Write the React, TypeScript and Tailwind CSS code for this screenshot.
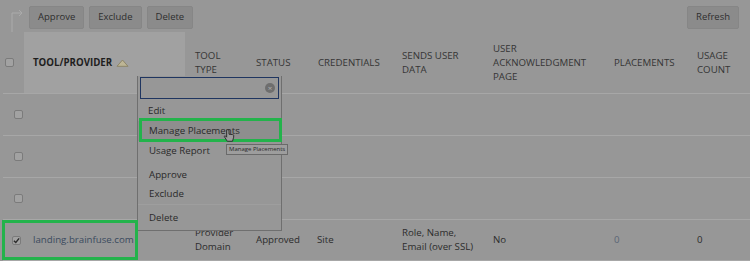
import React from "react";

const cols = [
  { w: "w-[24px]" },
  { w: "w-[161px]" },
  { w: "w-[61px]" },
  { w: "w-[62px]" },
  { w: "w-[84px]" },
  { w: "w-[91px]" },
  { w: "w-[121px]" },
  { w: "w-[83px]" },
  { w: "w-[63px]" },
];

const Checkbox = ({ checked = false }: { checked?: boolean }) => (
  <span className="flex h-[9px] w-[9px] items-center justify-center rounded-[2px] border border-[#7b7b7b] bg-[#a2a2a2]">
    {checked && (
      <svg width="7" height="7" viewBox="0 0 8 8">
        <path d="M1 4.2 L3.2 6.3 L7 1.5" fill="none" stroke="#2b2b2b" strokeWidth="1.6" />
      </svg>
    )}
  </span>
);

const ToolbarButton = ({ label }: { label: string }) => (
  <button className="h-[23px] rounded-[2px] border border-[#868686] bg-[#8b8b8b] px-[8px] text-[9.5px] text-[#2e2e2e]">
    {label}
  </button>
);

const EmptyRow = () => (
  <div className="flex h-[42px] items-center border-t border-[#a7a7a7]">
    <div className="flex w-[24px] justify-end pr-[4px]">
      <Checkbox />
    </div>
  </div>
);

export default function App() {
  return (
    <div
      className="relative h-[261px] w-[750px] overflow-hidden bg-[#979797] text-[9.7px] text-[#2c2c2c]"
      style={{ fontFamily: '"Open Sans", "Liberation Sans", sans-serif' }}
    >
      {/* toolbar */}
      <div className="flex h-[32px] items-start pt-[6px]">
        <div className="flex w-[29px] justify-start pl-[10px] pt-[2px]">
          <svg width="14" height="24" viewBox="0 0 14 24">
            <path d="M2 24 V5 H12 M9 2 L12 5 L9 8" fill="none" stroke="#ababab" strokeWidth="1" />
          </svg>
        </div>
        <div className="flex gap-[5px]">
          <ToolbarButton label="Approve" />
          <ToolbarButton label="Exclude" />
          <ToolbarButton label="Delete" />
        </div>
        <div className="ml-auto pr-[11px]">
          <ToolbarButton label="Refresh" />
        </div>
      </div>

      {/* header */}
      <div className="flex h-[61px] items-center leading-[14px] text-[#353535]">
        <div className={`${cols[0].w} flex justify-start pl-[5px]`}>
          <Checkbox />
        </div>
        <div className={`${cols[1].w} flex h-full items-center bg-[#a1a1a1] pl-[9px] font-bold text-[#1e1e1e]`}>
          TOOL/PROVIDER
          <svg className="ml-[4px]" width="13" height="8" viewBox="0 0 13 8">
            <path d="M1 7.3 L6.5 1 L12 7.3 Z" fill="#bdb595" stroke="#857c5c" strokeWidth="0.8" />
          </svg>
        </div>
        <div className={`${cols[2].w} pl-[10px]`}>TOOL<br />TYPE</div>
        <div className={`${cols[3].w} pl-[10px]`}>STATUS</div>
        <div className={`${cols[4].w} pl-[10px]`}>CREDENTIALS</div>
        <div className={`${cols[5].w} pl-[10px]`}>SENDS USER<br />DATA</div>
        <div className={`${cols[6].w} pl-[10px]`}>USER<br />ACKNOWLEDGMENT<br />PAGE</div>
        <div className={`${cols[7].w} pl-[10px]`}>PLACEMENTS</div>
        <div className={`${cols[8].w} pl-[10px]`}>USAGE<br />COUNT</div>
      </div>

      <div className="ml-[3px]">
        <EmptyRow />
        <EmptyRow />
        <EmptyRow />
        <div className="flex h-[42px] items-center border-t border-b border-[#a7a7a7] leading-[14px]">
          <div className="flex w-[21px] justify-end pr-[3px]">
            <Checkbox checked />
          </div>
          <div className={`${cols[1].w} pl-[9px] text-[#3a4a5e]`}>landing.brainfuse.com</div>
          <div className={`${cols[2].w} pl-[10px]`}>Provider<br />Domain</div>
          <div className={`${cols[3].w} pl-[10px]`}>Approved</div>
          <div className={`${cols[4].w} pl-[9px]`}>Site</div>
          <div className={`${cols[5].w} pl-[10px]`}>Role, Name,<br />Email (over SSL)</div>
          <div className={`${cols[6].w} pl-[10px]`}>No</div>
          <div className={`${cols[7].w} pl-[10px] text-[#5a6676]`}>0</div>
          <div className={`${cols[8].w} pl-[10px]`}>0</div>
        </div>
      </div>

      {/* context menu */}
      <div className="absolute left-[137px] top-[76px] flex h-[155px] w-[145px] flex-col border border-t-0 border-[#6f6f6f] bg-[#979797] text-[#2a2a2a]">
        <div className="mx-[2px] mt-[1px] flex h-[22px] items-center justify-end border border-[#1f3560] pr-[3px]">
          <span className="flex h-[10px] w-[10px] items-center justify-center rounded-full bg-[#6e6e6e] text-[8px] leading-none text-[#b0b0b0]">
            ×
          </span>
        </div>
        <div className="mt-[2px] flex h-[20px] items-center pl-[10px]">Edit</div>
        <div className="flex h-[20px] items-center bg-[#8e8e8e] pl-[11px]">Manage Placements</div>
        <div className="flex h-[20px] items-center pl-[11px]">Usage Report</div>
        <div className="mt-[4px] flex h-[20px] items-center pl-[11px]">Approve</div>
        <div className="flex h-[20px] items-center border-b border-[#9e9e9e] pl-[11px]">Exclude</div>
        <div className="mt-[3px] flex h-[20px] items-center pl-[11px]">Delete</div>
      </div>

      {/* green highlights */}
      <div className="absolute left-[139px] top-[118px] h-[24px] w-[143px] border-[3px] border-[#23b34b]" />
      <div className="absolute left-[2px] top-[220px] h-[40px] w-[136px] border-[3px] border-[#23b34b]" />

      {/* cursor */}
      <svg className="absolute left-[223px] top-[129px]" width="12" height="14" viewBox="0 0 10 12">
        <path
          d="M3 1 V7 L2 6 Q1 5.5 1 6.5 L3.5 10.5 H8 L9 7 V5.5 Q9 4.8 8 4.8 L5 4.5 V1 Q4 0 3 1 Z"
          fill="#9b9b9b"
          stroke="#2a2a2a"
          strokeWidth="0.8"
        />
      </svg>

      {/* tooltip */}
      <div className="absolute left-[226px] top-[144px] border border-[#6a6a6a] bg-[#9d9d9d] px-[2px] text-[6px] leading-[9px] text-[#2a2a2a]">
        Manage Placements
      </div>
    </div>
  );
}
